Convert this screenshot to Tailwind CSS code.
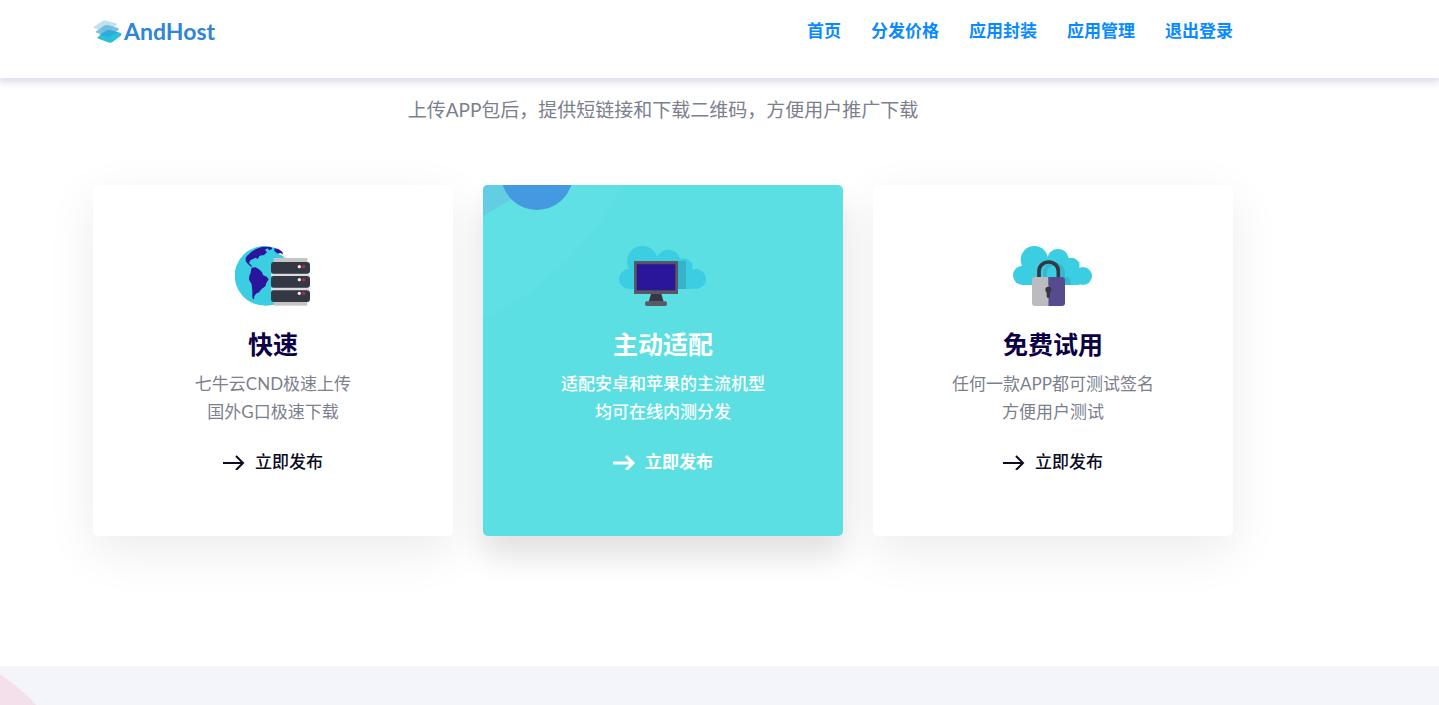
<!doctype html>
<html lang="zh-CN">

<head>
	<title>AndHost</title>
	<meta charset="utf-8">
	<meta name="viewport" content="width=device-width, initial-scale=1">
	<script src="https://cdn.jsdelivr.net/npm/@tailwindcss/browser@4"></script>
</head>

<body class="min-h-screen flex flex-col bg-white text-[17px] leading-7 text-[#7c808d] font-['Lato','Noto_Sans_CJK_SC',sans-serif]">

	<!-- header -->
	<header class="sticky top-0 z-10 bg-white pt-[17px] pb-[33px] pr-[113px] shadow-[0_2px_8px_2px_rgba(20,0,110,0.15)]">
		<div class="max-w-[1140px] mx-auto flex justify-between items-center">
			<a href="#" class="flex items-center gap-0.5 font-bold text-[23px] text-[#2f86d6]">
				<svg class="w-[29px] h-[23px]" viewBox="39 27 87 70">
					<path d="M42 47 L67 30 Q73 27 80 29 L108 37 Q114 40 109 44 L86 59 Q79 63 72 61 L43 52 Q38 50 42 47Z" fill="#bfe3ee" />
					<path d="M48 61 L73 44 Q79 41 86 43 L114 51 Q120 54 115 58 L92 73 Q85 77 78 75 L49 66 Q44 64 48 61Z" fill="#65b4dc" fill-opacity=".85" />
					<path d="M54 78 L78 60 Q86 56 93 58 L121 66 Q128 70 123 75 L99 93 Q92 98 84 95 L55 84 Q50 81 54 78Z" fill="#2bc0d8" />
					<path d="M56 71 L80 60 Q86 56 93 58 L115 64 L92 76 Q85 79 78 77Z" fill="#2f9fda" fill-opacity=".6" />
				</svg>
				AndHost
			</a>
			<nav class="flex gap-[30px] font-bold text-[#0a8aff]">
				<a href="#">首页</a>
				<a href="#">分发价格</a>
				<a href="#">应用封装</a>
				<a href="#">应用管理</a>
				<a href="#">退出登录</a>
			</nav>
		</div>
	</header>

	<!-- features -->
	<section class="pt-[18px] pb-[130px] pr-[113px]">
		<div class="max-w-[1140px] mx-auto text-center">
			<p class="text-[19px]">上传APP包后，提供短链接和下载二维码，方便用户推广下载</p>

			<div class="grid grid-cols-3 gap-[30px] mt-[61px]">
				<div class="bg-white rounded-[5px] pt-[61px] pb-[58px] shadow-[0_15px_50px_rgba(0,0,0,0.08)]">
					<svg class="w-[76px] h-[60px] mx-auto" viewBox="30 33 228 180">
						<path d="M150 44 Q180 52 190 72 L150 72Z" fill="#f5efe2" />
						<path d="M207 122 A89 89 0 1 1 164 46 L158 56 L172 62 L180 70 L160 72 L160 205 A89 89 0 0 1 118 212Z" fill="#3bcde2" />
						<path d="M62 68 Q80 43 112 35 L138 36 L142 42 L132 46 L128 40 L120 44 L126 52 L117 60 L104 62 L98 72 L92 68 L84 72 L76 76 L72 84 L78 90 L82 96 L76 94 L66 84 L62 78Z M148 40 L160 42 L172 50 L174 58 L166 54 L158 56 L148 48Z" fill="#2a169a" />
						<path d="M80 98 L92 97 L104 104 L111 112 L114 120 L126 126 L131 133 L124 144 L121 154 L110 162 L102 172 L93 176 L88 184 L87 194 L82 188 L82 168 L80 148 L72 134 L73 122 L76 116Z" fill="#2a169a" />
						<rect x="146" y="69" width="101" height="143" fill="#c5c5c8" />
						<rect x="138" y="116" width="116" height="8" fill="#dcdce0" />
						<rect x="138" y="158" width="116" height="8" fill="#dcdce0" />
						<rect x="138" y="81" width="117" height="35" rx="9" fill="#343744" />
						<rect x="138" y="123" width="117" height="35" rx="9" fill="#343744" />
						<rect x="138" y="166" width="117" height="35" rx="9" fill="#343744" />
						<g fill="#f5efe2">
							<circle cx="223" cy="95" r="5" />
							<circle cx="223" cy="134" r="5" />
							<circle cx="223" cy="175" r="5" />
						</g>
						<g fill="#c0273f">
							<circle cx="236" cy="95" r="5" />
							<circle cx="236" cy="134" r="5" />
							<circle cx="236" cy="175" r="5" />
						</g>
					</svg>
					<h3 class="mt-6 text-[25px] leading-7 font-bold text-[#0c0045]">快速</h3>
					<p class="mt-3">七牛云CND极速上传<br>国外G口极速下载</p>
					<a href="#" class="mt-[23px] inline-flex items-center gap-2.5 leading-[26px] font-medium text-[#0b0b22]">
						<svg class="w-[22px] h-4" viewBox="0 0 22 16" fill="none" stroke="currentColor" stroke-width="2">
							<path d="M0 9H20M13 2L20 9L13 16" />
						</svg>
						立即发布
					</a>
				</div>

				<div class="relative overflow-hidden bg-[#5bdfe2] rounded-[5px] pt-[61px] pb-[58px] text-white shadow-[0_20px_30px_rgba(0,0,0,0.12)]">
					<!-- card decoration -->
					<svg class="absolute top-0 left-0 w-[140px] h-[134px]" viewBox="0 0 140 134">
						<circle cx="-120" cy="-130" r="290" fill="#5ee0e4" />
						<path d="M0 0H50L27 15L0 31Z" fill="#62cde3" />
						<circle cx="54" cy="-11" r="36" fill="#4499e0" />
					</svg>
					<svg class="relative w-[88px] h-[60px] mx-auto" viewBox="27 33 264 180">
						<g fill="#3bcde2">
							<circle cx="57" cy="132" r="30" />
							<circle cx="97" cy="79" r="46" />
							<circle cx="175" cy="80" r="36" />
							<circle cx="220" cy="97" r="27" />
							<circle cx="258" cy="132" r="30" />
							<rect x="57" y="85" width="190" height="77" />
						</g>
						<rect x="204" y="78" width="24" height="84" fill="#35b3cb" />
						<rect x="72" y="78" width="132" height="99" fill="#5b5866" />
						<rect x="80" y="87" width="116" height="79" fill="#2a169a" stroke="#4c4a58" stroke-width="2" />
						<path d="M123 177H154L161 200H116Z" fill="#343744" />
						<rect x="105" y="199" width="66" height="14" rx="6" fill="#5b5866" />
					</svg>
					<h3 class="mt-6 text-[25px] leading-7 font-bold">主动适配</h3>
					<p class="mt-3 font-medium">适配安卓和苹果的主流机型<br>均可在线内测分发</p>
					<a href="#" class="mt-[23px] inline-flex items-center gap-2.5 leading-[26px] font-bold">
						<svg class="w-[22px] h-4" viewBox="0 0 22 16" fill="none" stroke="currentColor" stroke-width="3">
							<path d="M0 9H20M13 2L20 9L13 16" />
						</svg>
						立即发布
					</a>
				</div>

				<div class="bg-white rounded-[5px] pt-[61px] pb-[58px] shadow-[0_15px_50px_rgba(0,0,0,0.08)]">
					<svg class="w-[80px] h-[60px] mx-auto" viewBox="24 33 240 180">
						<g fill="#3bcde2">
							<circle cx="53" cy="121" r="29" />
							<circle cx="88" cy="74" r="41" />
							<circle cx="159" cy="74" r="32" />
							<circle cx="198" cy="93" r="25" />
							<circle cx="234" cy="123" r="27" />
							<rect x="53" y="80" width="170" height="70" />
						</g>
						<path d="M179 126Q195 126 196 136V150H179Z" fill="#35b8cf" />
						<path d="M120 128V108A28 28 0 0 1 174 108V128" fill="none" stroke="#35b8cf" stroke-width="11" />
						<path d="M102 128V108A29 27 0 0 1 160 108V128" fill="none" stroke="#343744" stroke-width="11" />
						<path d="M130 126V213H90Q81 213 81 204V135Q81 126 90 126Z" fill="#bcbbc0" />
						<path d="M130 126V213H171Q180 213 180 204V135Q180 126 171 126Z" fill="#574b90" />
						<circle cx="130" cy="164" r="9" fill="#343744" />
						<rect x="125" y="166" width="10" height="23" rx="5" fill="#343744" />
					</svg>
					<h3 class="mt-6 text-[25px] leading-7 font-bold text-[#0c0045]">免费试用</h3>
					<p class="mt-3">任何一款APP都可测试签名<br>方便用户测试</p>
					<a href="#" class="mt-[23px] inline-flex items-center gap-2.5 leading-[26px] font-medium text-[#0b0b22]">
						<svg class="w-[22px] h-4" viewBox="0 0 22 16" fill="none" stroke="currentColor" stroke-width="2">
							<path d="M0 9H20M13 2L20 9L13 16" />
						</svg>
						立即发布
					</a>
				</div>
			</div>
		</div>
	</section>

	<!-- next section -->
	<section class="relative grow overflow-hidden bg-[#f4f5fa]">
		<div class="absolute top-[-21px] left-[-285px] size-[370px] rounded-full bg-[#f4e0eb]"></div>
	</section>

</body>
</html>
